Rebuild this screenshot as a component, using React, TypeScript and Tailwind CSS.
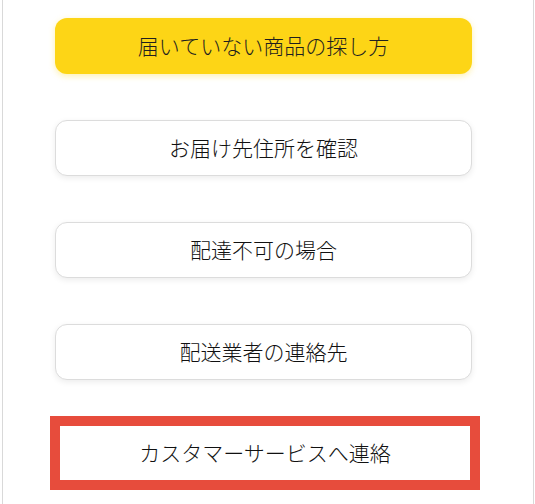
import React from 'react';

const LINKS = [
  { id: 'find', label: '届いていない商品の探し方', primary: true },
  { id: 'address', label: 'お届け先住所を確認' },
  { id: 'undeliverable', label: '配達不可の場合' },
  { id: 'carrier', label: '配送業者の連絡先' },
];

const font = { fontFamily: '"Noto Sans CJK JP", "Noto Sans", sans-serif' };

export default function App() {
  return (
    <div className="min-h-[504px] bg-white">
      <div
        className="ml-[2px] w-[532px] min-h-[504px] border-x border-[#d9d9d9] pt-[18px] pl-[52px] font-light"
        style={font}
      >
        <div className="flex w-[417px] flex-col gap-[46px]">
          {LINKS.map((link) => (
            <button
              key={link.id}
              className={
                link.primary
                  ? 'flex h-[56px] w-full items-center justify-center rounded-xl bg-[#fdd516] text-[21px] text-[#1f1f1f] shadow-[0_2px_6px_rgba(253,213,22,0.35)]'
                  : 'flex h-[56px] w-full items-center justify-center rounded-xl border border-[#dcdcdc] bg-white text-[21px] text-[#111] shadow-[0_2px_6px_rgba(0,0,0,0.08)]'
              }
            >
              {link.label}
            </button>
          ))}
          <button className="-mt-[10px] -ml-[5px] flex h-[74px] w-[430px] items-center justify-center border-[10px] border-[#e74c3c] bg-white text-[21px] text-[#111]">
            カスタマーサービスへ連絡
          </button>
        </div>
      </div>
    </div>
  );
}
